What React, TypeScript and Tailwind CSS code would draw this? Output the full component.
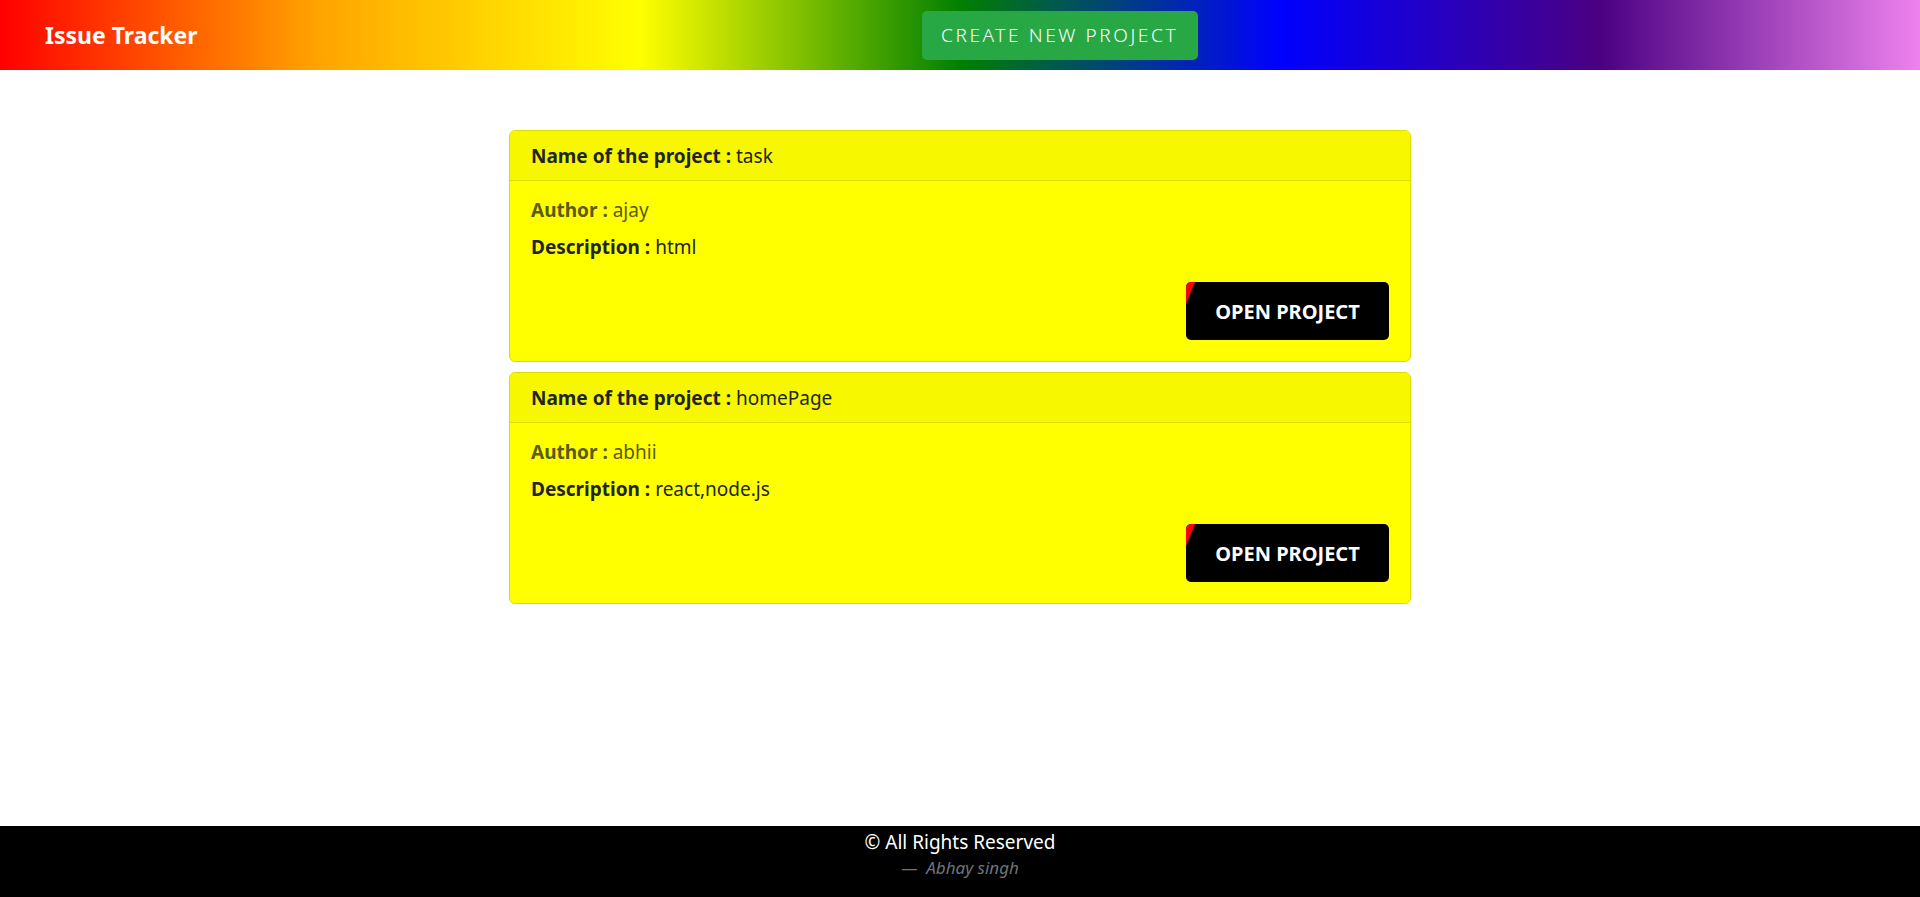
const projects = [
    { id: 1, name: 'task', author: 'ajay', description: 'html' },
    { id: 2, name: 'homePage', author: 'abhii', description: 'react,node.js' },
];

function ProjectCard({ name, author, description }: { name: string; author: string; description: string }) {
    return (
        <div className="mb-[10px] overflow-hidden rounded-[6px] border border-[#dcdc00] bg-[#ffff00]">
            <div className="flex h-[50px] items-center border-b border-[#dcdc00] bg-[#f7f700] px-[21px] pt-[2px] text-[19px]">
                <span className="font-bold">Name of the project :</span>
                <span className="ml-[5px]">{name}</span>
            </div>
            <div className="px-[21px] pb-[21px] pt-[14px] text-[19px]">
                <p className="h-[30px] leading-[30px] text-[#5b5b16]">
                    <span className="font-bold">Author :</span> {author}
                </p>
                <p className="mt-[7px] h-[30px] leading-[30px]">
                    <span className="font-bold">Description :</span> {description}
                </p>
                <div className="mt-[20px] flex justify-end">
                    <button
                        type="button"
                        className="relative h-[58px] w-[203px] overflow-hidden rounded-[5px] bg-black pt-[1px] text-[20px] font-bold text-white"
                    >
                        <span className="absolute left-0 top-0 h-[22px] w-[9px] bg-[#ff0000] [clip-path:polygon(0_0,100%_0,0_100%)]" />
                        OPEN PROJECT
                    </button>
                </div>
            </div>
        </div>
    );
}

export default function App() {
    return (
        <div className="flex min-h-screen flex-col bg-white font-['Noto_Sans',sans-serif] text-[#212529]">
            <nav className="flex h-[70px] items-center bg-[linear-gradient(to_right,red,orange,yellow,green,blue,indigo,violet)] pl-[45px]">
                <a href="#" className="text-[23px] font-bold text-white">
                    Issue Tracker
                </a>
                <button
                    type="button"
                    className="ml-[724px] h-[49px] w-[276px] rounded-[5px] bg-[#28a745] text-[19px] font-light tracking-[2.6px] text-white"
                >
                    CREATE NEW PROJECT
                </button>
            </nav>

            <main className="flex-1 pt-[60px]">
                <div className="mx-auto w-[902px]">
                    {projects.map((project) => (
                        <ProjectCard
                            key={project.id}
                            name={project.name}
                            author={project.author}
                            description={project.description}
                        />
                    ))}
                </div>
            </main>

            <footer className="flex h-[71px] flex-col items-center bg-black pt-[3px]">
                <p className="text-[19px] leading-[27px] text-white">© All Rights Reserved</p>
                <p className="text-[17px] italic leading-[24px] text-[#6c757d]">— &nbsp;Abhay singh</p>
            </footer>
        </div>
    );
}
